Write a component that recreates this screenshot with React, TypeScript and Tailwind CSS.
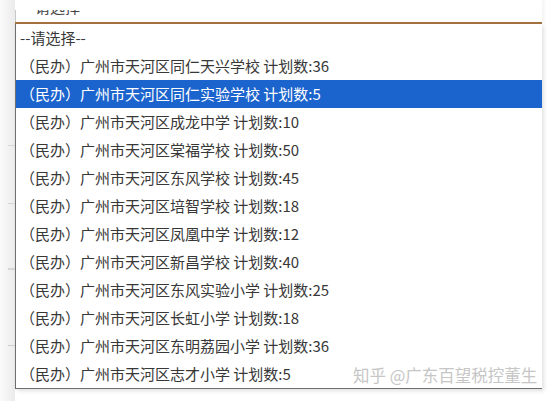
import React from "react";

const options = [
  { t: "--请选择--" },
  { t: "（民办）广州市天河区同仁天兴学校 计划数:36" },
  { t: "（民办）广州市天河区同仁实验学校 计划数:5", sel: true },
  { t: "（民办）广州市天河区成龙中学 计划数:10" },
  { t: "（民办）广州市天河区棠福学校 计划数:50" },
  { t: "（民办）广州市天河区东风学校 计划数:45" },
  { t: "（民办）广州市天河区培智学校 计划数:18" },
  { t: "（民办）广州市天河区凤凰中学 计划数:12" },
  { t: "（民办）广州市天河区新昌学校 计划数:40" },
  { t: "（民办）广州市天河区东风实验小学 计划数:25" },
  { t: "（民办）广州市天河区长虹小学 计划数:18" },
  { t: "（民办）广州市天河区东明荔园小学 计划数:36" },
  { t: "（民办）广州市天河区志才小学 计划数:5" },
];

export default function App() {
  return (
    <div
      className="relative w-[551px] h-[401px] overflow-hidden bg-white flex"
      style={{ fontFamily: '"Noto Sans CJK SC", "Noto Sans", sans-serif' }}
    >
      {/* page behind: faint left strip */}
      <div className="w-[15px] h-[401px] shrink-0 bg-gradient-to-r from-[#fbfbfb] to-[#ebebeb] flex flex-col items-end pt-[145px]">
        <div className="w-[7px] h-[1px] bg-[#d6d6d6]" />
        <div className="w-[7px] h-[1px] bg-[#d6d6d6] mt-[57px]" />
        <div className="w-[7px] h-[2px] bg-[#d6d6d6] mt-[64px]" />
        <div className="w-[7px] h-[1px] bg-[#cfcfcf] mt-[75px]" />
      </div>

      <div className="w-[527px] flex flex-col">
        {/* select input (cut at top) */}
        <div className="h-[24px] pt-[10px] border-b-2 border-[#a4733f] shadow-[2px_0_3px_rgba(0,0,0,0.05)]">
          <div className="h-[12px] border-l border-[#c8c8c8] overflow-hidden pl-[19px]">
            <div className="-mt-[13px] text-[15px] leading-[20px] text-[#444]">请选择</div>
          </div>
        </div>
        {/* dropdown list */}
        <div className="flex flex-col border-l border-b border-[#6e6e6e] bg-white shadow-[2px_2px_4px_rgba(0,0,0,0.12)]">
          {options.map((o, i) => (
            <div
              key={i}
              className={
                "h-[28px] flex items-center whitespace-nowrap text-[15px] pl-[4px] " +
                (o.sel ? "bg-[#1b63cd] text-white" : "text-[#383838]")
              }
            >
              {o.t}
            </div>
          ))}
        </div>
      </div>

      {/* watermark */}
      <div
        className="absolute left-[353px] top-[363px] text-[16.5px] leading-[24px] text-[#c6c6c6] whitespace-nowrap"
        style={{ textShadow: "0 0 1px #fff" }}
      >
        知乎 @广东百望税控董生
      </div>
    </div>
  );
}
